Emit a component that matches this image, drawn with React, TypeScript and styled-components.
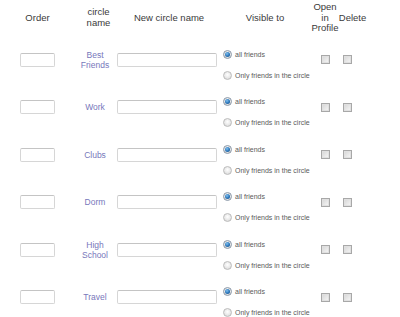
import React from "react";
import styled, { createGlobalStyle } from "styled-components";

const Global = createGlobalStyle`
  html, body { margin: 0; padding: 0; background: #fff; }
  body { font-family: "Liberation Sans", Arial, sans-serif; }
`;

const Table = styled.div`
  width: 400px;
  display: grid;
  grid-template-columns: 75px 40px 105px 90px 28px 27px 35px;
`;

const HeaderCell = styled.div<{ $shift?: number }>`
  height: 36px;
  display: flex;
  align-items: center;
  justify-content: center;
  text-align: center;
  font-size: 9.5px;
  line-height: 10.7px;
  color: #3a3a3a;
  padding-left: ${(p) => p.$shift ?? 0}px;
  white-space: nowrap;
`;

const Cell = styled.div<{ $justify?: string; $shift?: number; $top?: number }>`
  height: 47.5px;
  display: flex;
  align-items: center;
  justify-content: ${(p) => p.$justify ?? "center"};
  padding-left: ${(p) => p.$shift ?? 0}px;
  padding-top: ${(p) => p.$top ?? 0}px;
  box-sizing: border-box;
`;

const TextBox = styled.div<{ $w: number }>`
  width: ${(p) => p.$w}px;
  height: 14px;
  box-sizing: border-box;
  border: 1px solid #d6d6d6;
  border-top-color: #c4c4c4;
  border-radius: 2px;
  background: #fff;
`;

const CircleName = styled.div`
  font-size: 8.5px;
  line-height: 10px;
  color: #7777bb;
  text-align: center;
`;

const RadioGroup = styled.div`
  display: flex;
  flex-direction: column;
  gap: 11px;
`;

const RadioRow = styled.div`
  display: flex;
  align-items: center;
  gap: 3px;
  height: 10px;
  font-size: 7px;
  color: #5a5a5a;
  white-space: nowrap;
`;

const RadioDot = styled.span<{ $on?: boolean }>`
  width: 9px;
  height: 9px;
  box-sizing: border-box;
  border-radius: 50%;
  border: 1px solid ${(p) => (p.$on ? "#8a98a8" : "#bcbcbc")};
  background: radial-gradient(circle at 50% 40%, #ffffff 0%, #e6e6e6 60%, #d0d0d0 100%);
  display: flex;
  align-items: center;
  justify-content: center;
  &::after {
    content: "";
    display: ${(p) => (p.$on ? "block" : "none")};
    width: 5px;
    height: 5px;
    border-radius: 50%;
    background: radial-gradient(circle at 40% 35%, #7fc0f0 0%, #2a74b8 55%, #134a80 100%);
  }
`;

const CheckBox = styled.span`
  width: 9px;
  height: 9px;
  box-sizing: border-box;
  border: 1px solid #a8a8a8;
  background: linear-gradient(135deg, #d4d4d4 0%, #e8e8e8 55%, #f8f8f8 100%);
  box-shadow: inset 0 0 0 1px #e0e0e0;
`;

const circles = [
  ["Best", "Friends"],
  ["Work"],
  ["Clubs"],
  ["Dorm"],
  ["High", "School"],
  ["Travel"],
];

export default function App() {
  return (
    <>
      <Global />
      <Table>
        <HeaderCell>Order</HeaderCell>
        <HeaderCell $shift={7}>
          circle
          <br />
          name
        </HeaderCell>
        <HeaderCell $shift={3}>New circle name</HeaderCell>
        <HeaderCell>Visible to</HeaderCell>
        <HeaderCell $shift={2}>
          Open
          <br />
          in
          <br />
          Profile
        </HeaderCell>
        <HeaderCell $shift={2}>Delete</HeaderCell>
        <HeaderCell />
        {circles.map((lines, i) => (
          <React.Fragment key={i}>
            <Cell>
              <TextBox $w={35} />
            </Cell>
            <Cell>
              <CircleName>
                {lines.map((l, j) => (
                  <div key={j}>{l}</div>
                ))}
              </CircleName>
            </Cell>
            <Cell $justify="flex-start" $shift={2}>
              <TextBox $w={100} />
            </Cell>
            <Cell $justify="flex-start" $shift={3} $top={10}>
              <RadioGroup>
                <RadioRow>
                  <RadioDot $on />
                  all friends
                </RadioRow>
                <RadioRow>
                  <RadioDot />
                  Only friends in the circle
                </RadioRow>
              </RadioGroup>
            </Cell>
            <Cell $justify="flex-start" $shift={11}>
              <CheckBox />
            </Cell>
            <Cell $justify="flex-start" $shift={5}>
              <CheckBox />
            </Cell>
            <Cell />
          </React.Fragment>
        ))}
      </Table>
    </>
  );
}
